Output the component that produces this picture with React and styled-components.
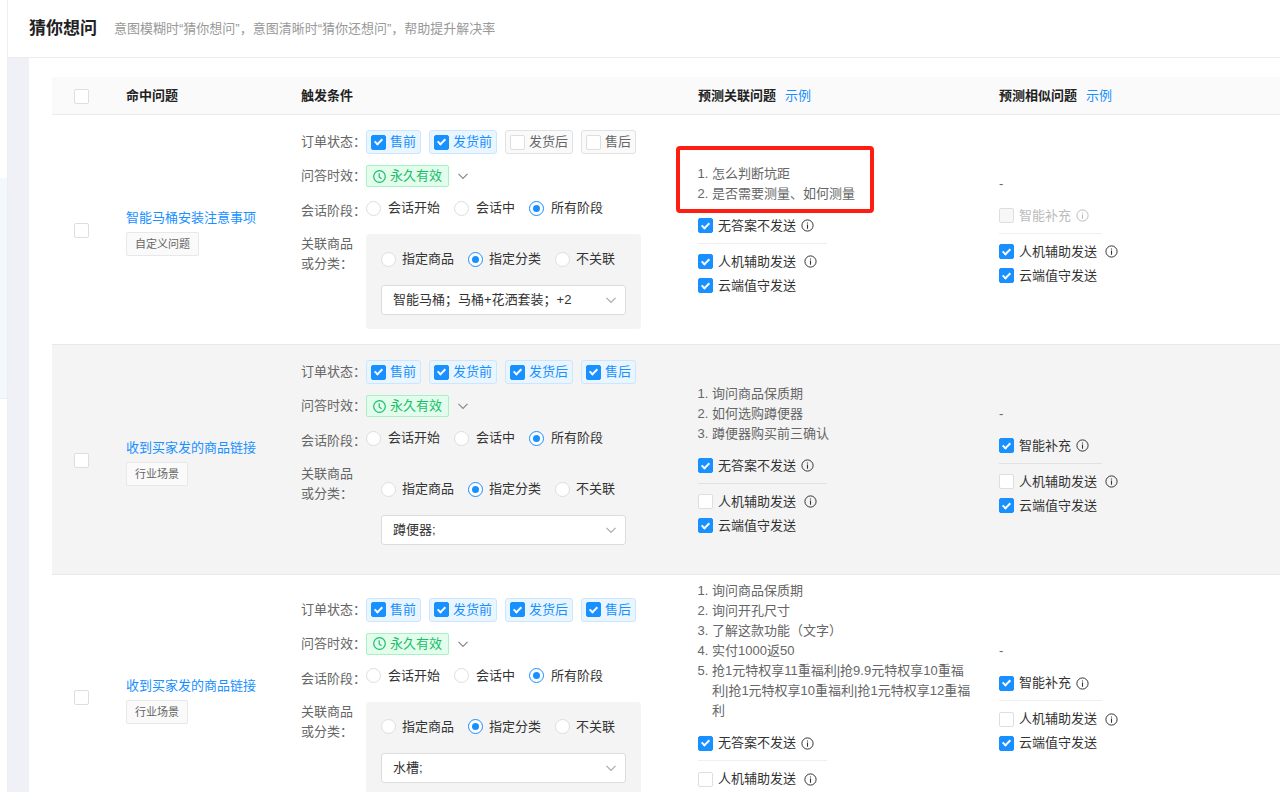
import React, { useState } from 'react'
import styled, { createGlobalStyle } from 'styled-components'

const GlobalStyle = createGlobalStyle`
    * {
        box-sizing: border-box;
    }

    body {
        margin: 0;
        background: #fff;
        color: #333;
        font-family: "Liberation Sans", "Noto Sans CJK SC", sans-serif;
        font-size: 13px;
        line-height: 20px;
    }
`;

const Page = styled.div`
    display: flex;
    height: 100vh;
    overflow: hidden;
`;

const Sidebar = styled.aside`
    flex: none;
    width: 8px;
    padding-top: 178px;
    border-right: 1px solid #edeef2;
    background: #fff;
`;

const SidebarActive = styled.div`
    height: 221px;
    background: #f3f8fd;
    border-bottom: 1px solid #e8eff7;
`;

const Main = styled.main`
    flex: 1;
    min-width: 0;
    background: #eff1f6;
`;

const Header = styled.header`
    display: flex;
    align-items: center;
    gap: 17px;
    height: 58px;
    padding-left: 21px;
    background: #fff;
    border-bottom: 1px solid #ececef;
`;

const Title = styled.h1`
    margin: 0;
    color: #222;
    font-size: 17px;
    font-weight: bold;
`;

const SubTitle = styled.p`
    margin: 0;
    color: #999;
`;

const Content = styled.section`
    min-height: 100%;
    margin-left: 21px;
    padding: 19px 0 0 23px;
    background: #fff;
`;

const Table = styled.table`
    width: 100%;
    table-layout: fixed;
    border-spacing: 0;
`;

const Col = styled.col`
    width: ${props => props.$width ? `${props.$width}px` : 'auto'};
`;

const Th = styled.th`
    height: 38px;
    padding: 0 16px;
    background: #fafafa;
    border-bottom: 1px solid #ebebeb;
    color: #222;
    text-align: left;
    font-weight: bold;
`;

const Row = styled.tr`
    background: ${props => props.$active ? '#f4f4f4' : '#fff'};
`;

const Td = styled.td`
    padding: 6px 10px 6px 16px;
    border-bottom: 1px solid #e8e8e8;
    vertical-align: middle;
`;

const CheckTd = styled(Td)`
    padding: 0;
    text-align: center;
`;

const CheckTh = styled(Th)`
    padding: 0;
    text-align: center;
`;

const ConditionTd = styled(Td)`
    padding: 15px 16px;
`;

const Link = styled.a`
    color: #1890ff;
    font-weight: normal;
    text-decoration: none;
`;

const ThLink = styled(Link)`
    margin-left: 9px;
`;

const Checkbox = styled.input.attrs({ type: 'checkbox' })`
    appearance: none;
    display: inline-grid;
    flex: none;
    place-content: center;
    width: 15px;
    height: 15px;
    margin: 0;
    vertical-align: middle;
    background: #fff;
    border: 1px solid #dedede;
    border-radius: 2px;

    &:checked {
        background: #1890ff;
        border-color: #1890ff;
    }

    &:checked::after {
        content: '';
        width: 3px;
        height: 6px;
        margin-bottom: 2px;
        border: solid #fff;
        border-width: 0 2px 2px 0;
        transform: rotate(45deg);
    }

    &:disabled {
        background: #f7f7f7;
    }
`;

const Radio = styled.input.attrs({ type: 'radio' })`
    appearance: none;
    display: inline-grid;
    flex: none;
    place-content: center;
    width: 15px;
    height: 15px;
    margin: 0;
    background: #fff;
    border: 1px solid #dedede;
    border-radius: 50%;

    &:checked {
        border-color: #1890ff;
    }

    &:checked::after {
        content: '';
        width: 7px;
        height: 7px;
        border-radius: 50%;
        background: #1890ff;
    }
`;

const Question = styled.div`
    display: flex;
    flex-direction: column;
    align-items: flex-start;
    gap: 4px;
    padding-top: 5px;
`;

const Tag = styled.span`
    padding: 0 8px;
    background: #fafafa;
    border: 1px solid #e8e8e8;
    border-radius: 2px;
    color: #666;
    font-size: 11px;
    line-height: 22px;
`;

const Conditions = styled.div`
    display: flex;
    flex-direction: column;
    gap: 11px;
`;

const Line = styled.div`
    display: flex;
    align-items: ${props => props.$align || 'center'};
`;

const StageLine = styled(Line)`
    height: 23px;
    margin-bottom: 2px;
`;

const Label = styled.span`
    flex: none;
    align-self: ${props => props.$align || 'auto'};
    width: 65px;
    color: #666;
`;

const Chips = styled.div`
    display: flex;
    gap: 8px;
`;

const Chip = styled.label`
    display: flex;
    align-items: center;
    gap: 4px;
    height: 24px;
    padding: 0 4px;
    background: ${props => props.$on ? '#e9f5ff' : '#fafafa'};
    border: 1px solid ${props => props.$on ? '#cce6ff' : '#e2e2e2'};
    border-radius: 3px;
    color: ${props => props.$on ? '#1890ff' : '#666'};
`;

const TimeButton = styled.button`
    display: flex;
    align-items: center;
    gap: 8px;
    padding: 0;
    background: none;
    border: 0;
    font: inherit;
`;

const TimeTag = styled.span`
    display: flex;
    align-items: center;
    gap: 4px;
    padding: 0 6px;
    background: #e3fdec;
    border: 1px solid #a9f0c2;
    border-radius: 2px;
    color: #19be6b;
`;

const Radios = styled.div`
    display: flex;
    gap: 14px;
`;

const RadioLabel = styled.label`
    display: flex;
    align-items: center;
    gap: ${props => props.$gap}px;
`;

const Panel = styled.div`
    display: flex;
    flex-direction: column;
    gap: 16px;
    width: 275px;
    padding: 15px 15px 14px;
    background: #f4f4f4;
    border-radius: 4px;
`;

const SelectBox = styled.div`
    display: grid;
    align-items: center;

    > * {
        grid-area: 1 / 1;
    }

    > svg {
        justify-self: end;
        margin-right: 9px;
        pointer-events: none;
    }
`;

const Select = styled.select`
    appearance: none;
    width: 100%;
    height: 30px;
    padding: 0 30px 0 11px;
    background: #fff;
    border: 1px solid #dcdcdc;
    border-radius: 3px;
    color: #333;
    font: inherit;
`;

const Predict = styled.div`
    display: flex;
    flex-direction: column;
    align-items: flex-start;
    gap: 4px;
`;

const List = styled.ol`
    position: relative;
    margin: 0 0 8px;
    padding: 0 0 0 14px;
    color: #666;

    ${props => props.$marked && `
        &::after {
            content: '';
            position: absolute;
            inset: -18px -19px -9px -22px;
            border: 4px solid #ff1c10;
            border-radius: 4px;
        }
    `}
`;

const Empty = styled.div`
    margin-bottom: 8px;
    color: #666;
`;

const TopCheck = styled.div`
    margin-bottom: 4px;
    padding: 0 13px 7px 0;
    border-bottom: 1px solid ${props => props.$dark ? '#e2e2e2' : '#efefef'};
`;

const CheckLabel = styled.label`
    display: flex;
    align-items: center;
    gap: 5px;
    color: ${props => props.$disabled ? '#bbb' : '#333'};

    > svg {
        margin-left: ${props => props.$space ? 3 : 0}px;
    }
`;

const ArrowIcon = ({ color }) => (
    <svg width="12" height="12" viewBox="0 0 12 12" fill="none" stroke={color} strokeWidth="1.2">
        <path d="M1.5 3.9 6 8.5l4.5-4.6" />
    </svg>
)

const ClockIcon = () => (
    <svg width="13" height="13" viewBox="0 0 13 13" fill="none" stroke="currentColor" strokeWidth="1.2">
        <circle cx="6.5" cy="6.5" r="5.8" />
        <path d="M6.2 3.2v3.7l2.3 1.9" />
    </svg>
)

const InfoIcon = () => (
    <svg width="13" height="13" viewBox="0 0 13 13" fill="none" stroke="currentColor">
        <circle cx="6.5" cy="6.5" r="5.6" />
        <path d="M6.5 5.6v4.2M6.5 3.4v1.2" strokeWidth="1.1" />
    </svg>
)

const stages = ['会话开始', '会话中', '所有阶段']
const relations = ['指定商品', '指定分类', '不关联']

const rows = [
    {
        name: '智能马桶安装注意事项',
        tag: '自定义问题',
        status: { '售前': true, '发货前': true, '发货后': false, '售后': false },
        category: '智能马桶；马桶+花洒套装；+2',
        related: ['怎么判断坑距', '是否需要测量、如何测量'],
        marked: true,
        relatedAssist: true,
        smartDisabled: true,
        similarAssist: true
    },
    {
        name: '收到买家发的商品链接',
        tag: '行业场景',
        status: { '售前': true, '发货前': true, '发货后': true, '售后': true },
        category: '蹲便器;',
        related: ['询问商品保质期', '如何选购蹲便器', '蹲便器购买前三确认'],
        active: true
    },
    {
        name: '收到买家发的商品链接',
        tag: '行业场景',
        status: { '售前': true, '发货前': true, '发货后': true, '售后': true },
        category: '水槽;',
        related: [
            '询问商品保质期',
            '询问开孔尺寸',
            '了解这款功能（文字）',
            '实付1000返50',
            '抢1元特权享11重福利|抢9.9元特权享10重福利|抢1元特权享10重福利|抢1元特权享12重福利'
        ]
    }
]

const CheckItem = ({ text, checked, disabled, info, space }) => (
    <CheckLabel $disabled={disabled} $space={space}>
        <Checkbox defaultChecked={checked} disabled={disabled} />
        {text}
        {info && <InfoIcon />}
    </CheckLabel>
)

const StatusChip = ({ text, checked }) => {
    const [on, setOn] = useState(checked)

    return (
        <Chip $on={on}>
            <Checkbox checked={on} onChange={e => setOn(e.target.checked)} />
            {text}
        </Chip>
    )
}

const RadioList = ({ name, items, value, gap }) => (
    <Radios>
        {items.map(item => (
            <RadioLabel key={item} $gap={gap}>
                <Radio name={name} defaultChecked={item === value} />
                {item}
            </RadioLabel>
        ))}
    </Radios>
)

const QuestionRow = ({ row, index }) => (
    <Row $active={row.active}>
        <CheckTd><Checkbox aria-label={row.name} /></CheckTd>
        <Td>
            <Question>
                <Link href="#">{row.name}</Link>
                <Tag>{row.tag}</Tag>
            </Question>
        </Td>
        <ConditionTd>
            <Conditions>
                <Line>
                    <Label>订单状态：</Label>
                    <Chips>
                        {Object.keys(row.status).map(key => (
                            <StatusChip key={key} text={key} checked={row.status[key]} />
                        ))}
                    </Chips>
                </Line>
                <Line>
                    <Label>问答时效：</Label>
                    <TimeButton type="button">
                        <TimeTag><ClockIcon />永久有效</TimeTag>
                        <ArrowIcon color="#888" />
                    </TimeButton>
                </Line>
                <StageLine $align="flex-start">
                    <Label $align="flex-end">会话阶段：</Label>
                    <RadioList name={`stage${index}`} items={stages} value="所有阶段" gap={7} />
                </StageLine>
                <Line $align="flex-start">
                    <Label>关联商品<br />或分类：</Label>
                    <Panel>
                        <RadioList name={`relation${index}`} items={relations} value="指定分类" gap={6} />
                        <SelectBox>
                            <Select aria-label="指定分类">
                                <option>{row.category}</option>
                            </Select>
                            <ArrowIcon color="#aaa" />
                        </SelectBox>
                    </Panel>
                </Line>
            </Conditions>
        </ConditionTd>
        <Td>
            <Predict>
                <List $marked={row.marked}>
                    {row.related.map(item => <li key={item}>{item}</li>)}
                </List>
                <TopCheck $dark={row.active}>
                    <CheckItem text="无答案不发送" checked info />
                </TopCheck>
                <CheckItem text="人机辅助发送" checked={row.relatedAssist} info space />
                <CheckItem text="云端值守发送" checked />
            </Predict>
        </Td>
        <Td>
            <Predict>
                <Empty>-</Empty>
                <TopCheck $dark={row.active}>
                    <CheckItem text="智能补充" checked={!row.smartDisabled} disabled={row.smartDisabled} info />
                </TopCheck>
                <CheckItem text="人机辅助发送" checked={row.similarAssist} info space />
                <CheckItem text="云端值守发送" checked />
            </Predict>
        </Td>
    </Row>
)

const App = () => {
    return (
        <Page>
            <GlobalStyle />
            <Sidebar>
                <SidebarActive />
            </Sidebar>
            <Main>
                <Header>
                    <Title>猜你想问</Title>
                    <SubTitle>意图模糊时“猜你想问”，意图清晰时“猜你还想问”，帮助提升解决率</SubTitle>
                </Header>
                <Content>
                    <Table>
                        <colgroup>
                            <Col $width={58} />
                            <Col $width={175} />
                            <Col $width={397} />
                            <Col $width={301} />
                            <Col />
                        </colgroup>
                        <thead>
                            <tr>
                                <CheckTh><Checkbox aria-label="全选" /></CheckTh>
                                <Th>命中问题</Th>
                                <Th>触发条件</Th>
                                <Th>预测关联问题<ThLink href="#">示例</ThLink></Th>
                                <Th>预测相似问题<ThLink href="#">示例</ThLink></Th>
                            </tr>
                        </thead>
                        <tbody>
                            {rows.map((row, index) => (
                                <QuestionRow key={index} row={row} index={index} />
                            ))}
                        </tbody>
                    </Table>
                </Content>
            </Main>
        </Page>
    )
}

export default App
